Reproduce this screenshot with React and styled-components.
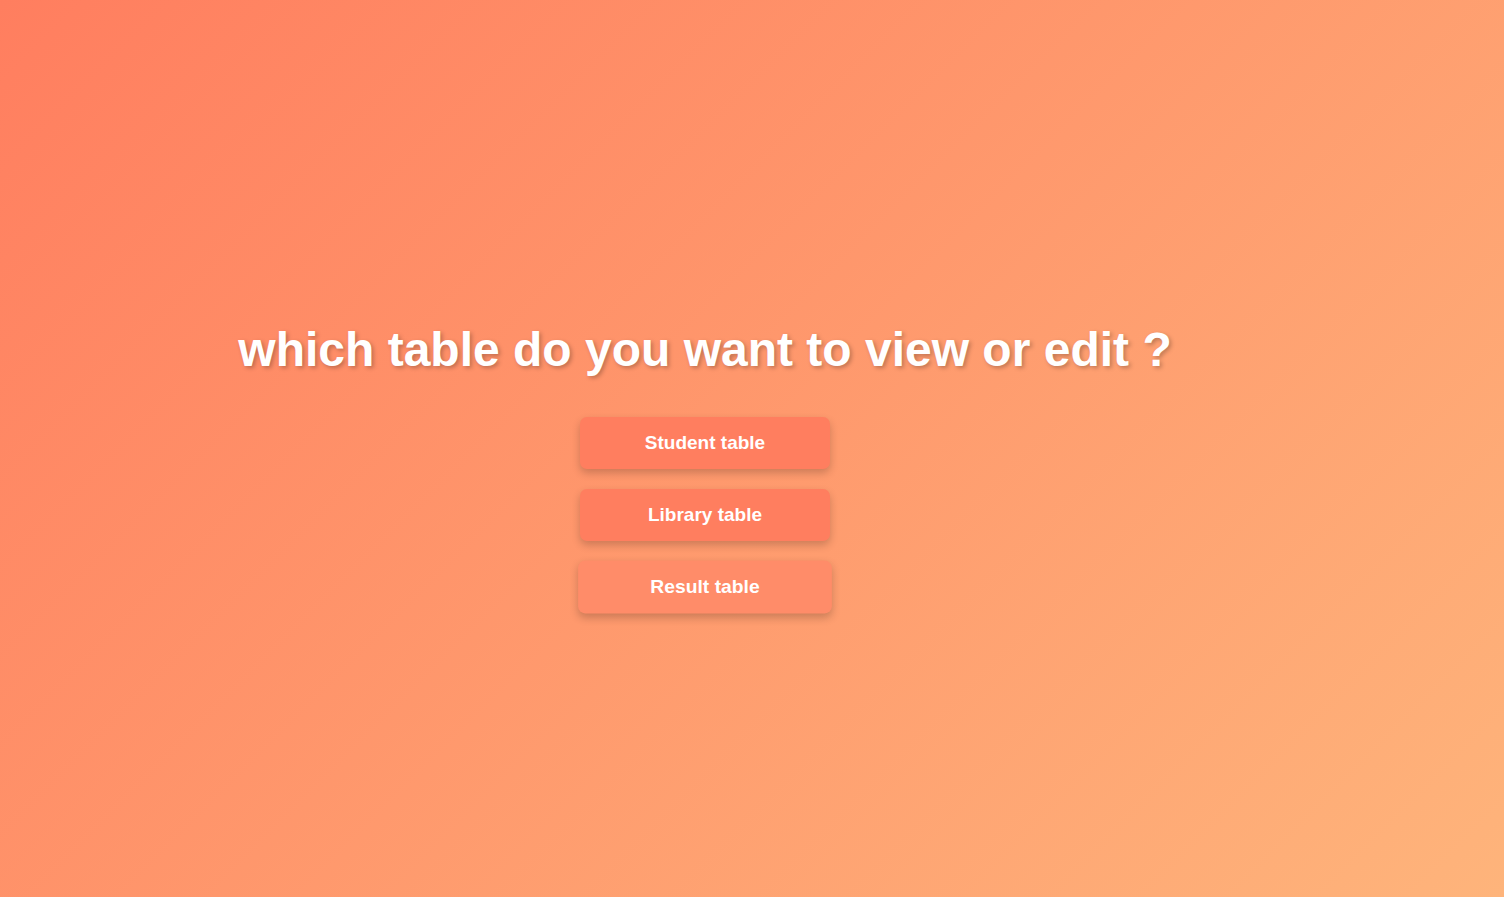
import React from "react";
import styled, { createGlobalStyle } from "styled-components";

const GlobalStyle = createGlobalStyle`
  html, body {
    margin: 0;
    padding: 0;
  }
  body {
    font-family: "Liberation Sans", Arial, sans-serif;
  }
`;

const Page = styled.div`
  min-height: 897px;
  box-sizing: border-box;
  background: linear-gradient(135deg, #ff7e5f, #feb47b);
  display: flex;
  flex-direction: column;
  align-items: center;
  justify-content: center;
  padding: 38px 94px 0 0;
`;

const Title = styled.h1`
  margin: 0 0 40px;
  color: #fff;
  font-size: 48px;
  font-weight: 700;
  text-shadow: 2px 2px 4px rgba(0, 0, 0, 0.25);
`;

const ButtonList = styled.div`
  display: flex;
  flex-direction: column;
  gap: 20px;
`;

const TableButton = styled.button`
  width: 250px;
  height: 52px;
  border: none;
  border-radius: 7px;
  background-color: ${(p) => (p.$hover ? "#ff8c69" : "#ff7e5f")};
  color: #fff;
  font-family: "Liberation Sans", Arial, sans-serif;
  font-size: 19px;
  font-weight: 700;
  cursor: pointer;
  box-shadow: 0 4px 8px rgba(0, 0, 0, 0.2);
  transform: ${(p) => (p.$hover ? "scale(1.015)" : "none")};
  transition: background-color 0.3s ease, transform 0.3s ease;

  &:hover {
    background-color: #ff8c69;
    transform: scale(1.015);
  }
`;

const App = () => {
  const tables = ["Student table", "Library table", "Result table"];

  return (
    <Page>
      <GlobalStyle />
      <Title>which table do you want to view or edit ?</Title>
      <ButtonList>
        {tables.map((name, i) => (
          <TableButton key={name} $hover={i === 2}>
            {name}
          </TableButton>
        ))}
      </ButtonList>
    </Page>
  );
};

export default App;
